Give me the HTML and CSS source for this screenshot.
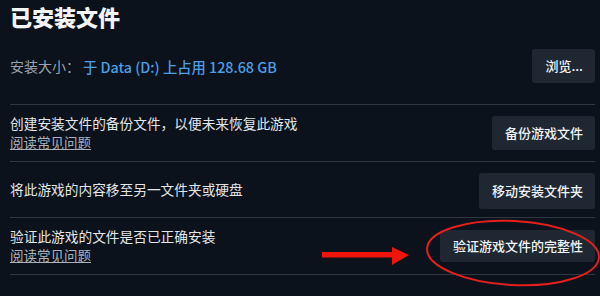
FILE: index.html
```html
<!DOCTYPE html>
<html lang="zh-CN">
<head>
<meta charset="utf-8">
<link rel="stylesheet" href="styles.css">
</head>
<body>
<div class="page">
  <h1 class="title">已安装文件</h1>
  <div class="row row-first">
    <div class="info">
      <span class="label">安装大小：</span><span class="size">于 Data (D:) 上占用 128.68 GB</span>
    </div>
    <button class="btn">浏览...</button>
  </div>
  <div class="row">
    <div class="info">
      <div class="desc">创建安装文件的备份文件，以便未来恢复此游戏</div>
      <a class="faq">阅读常见问题</a>
    </div>
    <button class="btn">备份游戏文件</button>
  </div>
  <div class="row row-short">
    <div class="info">
      <div class="desc">将此游戏的内容移至另一文件夹或硬盘</div>
    </div>
    <button class="btn btn-move">移动安装文件夹</button>
  </div>
  <div class="row">
    <div class="info">
      <div class="desc">验证此游戏的文件是否已正确安装</div>
      <a class="faq">阅读常见问题</a>
    </div>
    <button class="btn btn-verify">验证游戏文件的完整性</button>
  </div>
</div>
<svg class="annot" width="600" height="296" viewBox="0 0 600 296">
  <ellipse cx="513" cy="253" rx="86" ry="32" transform="rotate(3 513 253)" fill="none" stroke="#e3201c" stroke-width="2"/>
  <path d="M322 252 L392 252 L392 247 L409 255 L392 265 L392 257.5 L322 257.5 Z" fill="#f0140c"/>
</svg>
</body>
</html>
```
FILE: styles.css
```css
html, body {
  margin: 0;
  padding: 0;
  background: #0b121b;
  width: 600px;
  height: 296px;
  overflow: hidden;
}
body {
  position: relative;
  font-family: "Noto Sans CJK SC", "Noto Sans", sans-serif;
  color: #dfe3e7;
}
.page {
  padding: 0 5px 0 10px;
}
.title {
  margin: 0;
  height: 32px;
  line-height: 32px;
  font-size: 22px;
  font-weight: 900;
  color: #f2f4f6;
}
.row {
  display: flex;
  align-items: center;
  justify-content: space-between;
  height: 56px;
  border-bottom: 1px solid #2e3843;
}
.row-short {
  height: 55px;
}
.row-first {
  height: auto;
  padding: 17px 0 21px;
}
.info {
  display: flex;
  flex-direction: column;
  font-size: 13.7px;
  line-height: 19px;
}
.row-first .info {
  flex-direction: row;
  align-items: center;
  font-size: 14px;
}
.label {
  color: #9aa3ad;
  margin-right: 3px;
}
.size {
  color: #4c9fe6;
  font-weight: 500;
  font-size: 14.3px;
}
.desc {
  color: #e2e6ea;
}
.faq {
  color: #a9b2bb;
  text-decoration: underline;
  font-size: 13.5px;
}
.btn {
  height: 34px;
  padding: 0 12px 0 13px;
  border: none;
  border-radius: 3px;
  background: #1f2832;
  color: #f0f3f6;
  font-family: "Noto Sans CJK SC", "Noto Sans", sans-serif;
  font-size: 13px;
  font-weight: 500;
  line-height: 34px;
}
.btn-move {
  height: 36px;
  line-height: 36px;
  margin-top: 3px;
}
.btn-verify {
  height: 32px;
  line-height: 32px;
}
.annot {
  position: absolute;
  left: 0;
  top: 0;
  pointer-events: none;
}
```
